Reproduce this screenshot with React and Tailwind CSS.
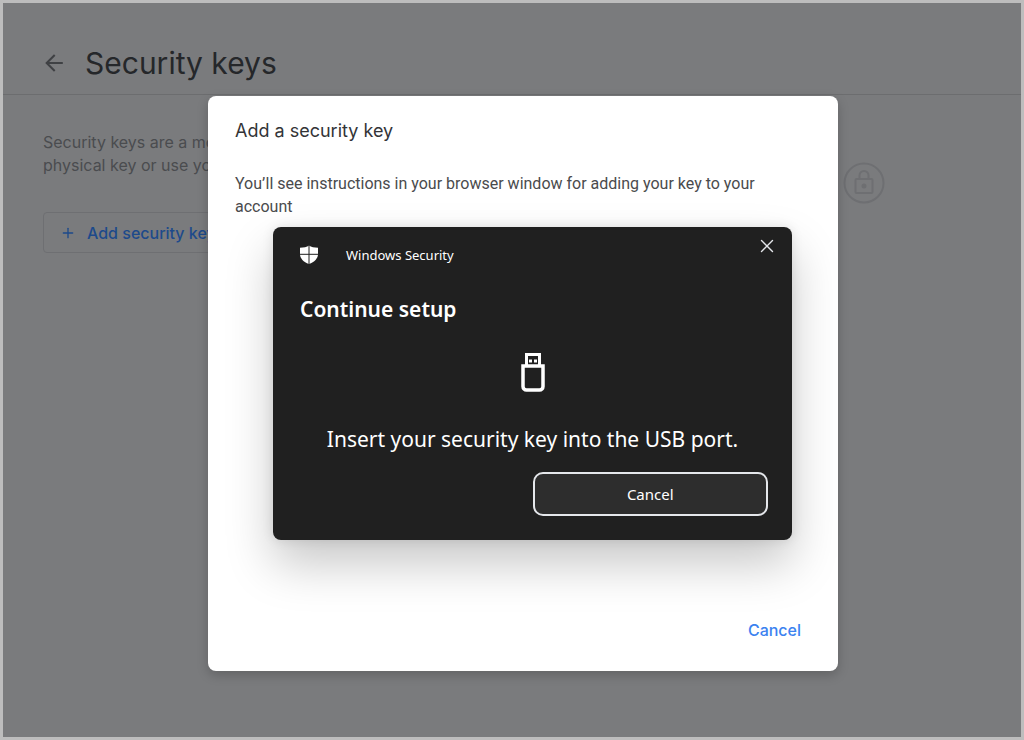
import { Plus, X } from 'lucide-react'

const BackIcon = () => (
  <svg width="22" height="20" viewBox="2 3 20 18" fill="currentColor" aria-hidden="true">
    <path d="M20 11.100H7.600L13.300 5.300L12 4L4 12L12 20L13.300 18.700L7.600 12.900H20Z" />
  </svg>
)

const ShieldIcon = () => (
  <svg width="20" height="20" viewBox="0 0 20 20" fill="none" aria-hidden="true">
    <path d="M10 0.500C12 2 15.500 2.700 19 2.700V9C19 13.500 15.500 17 10 19C4.500 17 1 13.500 1 9V2.700C4.500 2.700 8 2 10 0.500Z" fill="#fff" />
    <path d="M10 0V19M1 9.300H19" stroke="#202020" strokeWidth="1" />
  </svg>
)

const UsbIcon = () => (
  <svg width="24" height="40" viewBox="0 0 24 40" fill="none" stroke="#fff" aria-hidden="true">
    <path d="M5.500 13V2.500H18.500V13" strokeWidth="3" />
    <path d="M2 14H22V34.500A3.500 3.500 0 0 1 18.500 38H5.500A3.500 3.500 0 0 1 2 34.500Z" strokeWidth="3.500" />
    <path d="M8 9H11M13 9H16" strokeWidth="3" />
  </svg>
)

const LockBadge = () => (
  <svg width="42" height="42" viewBox="0 0 42 42" fill="none" stroke="#6e6f72" strokeWidth="2" aria-hidden="true">
    <circle cx="21" cy="21" r="19.500" />
    <rect x="12.500" y="17" width="17" height="14" rx="1" />
    <path d="M16.500 17V13.500A4.500 4.500 0 0 1 25.500 13.500V17" />
    <circle cx="21" cy="24" r="1.500" fill="#6e6f72" />
  </svg>
)

const SecurityPrompt = () => (
  <section
    aria-labelledby="prompt-title"
    className="ml-[38px] mt-[9px] w-[519px] max-w-full rounded-lg bg-[#202020] px-6 pb-6 pt-2 font-['Noto_Sans','Open_Sans',sans-serif] text-white shadow-[0_24px_48px_rgba(0,0,0,0.22),0_0_12px_rgba(0,0,0,0.1)]"
  >
    <div className="flex items-start justify-between">
      <div className="flex items-center gap-[27px] pl-0.5 pt-2.5">
        <ShieldIcon />
        <p className="text-[13px] leading-5">Windows Security</p>
      </div>
      <button type="button" aria-label="Close" className="-mr-2.5 text-gray-200">
        <X size={22} strokeWidth={1.5} />
      </button>
    </div>
    <h3 id="prompt-title" className="mt-7 pl-[3px] text-[21px] font-semibold leading-8">Continue setup</h3>
    <div className="mt-[27px] flex justify-center"><UsbIcon /></div>
    <p className="mt-[31px] text-center text-[21px] leading-8">Insert your security key into the USB port.</p>
    <div className="mt-[17px] flex justify-end">
      <button type="button" className="h-11 w-1/2 rounded-[10px] border-2 border-gray-200 bg-[#2d2d2d] text-[15px]">Cancel</button>
    </div>
  </section>
)

export default function App() {
  return (
    <div className="relative min-h-screen border-3 border-[#bdbdbd] bg-[#7a7b7d]">
      <header className="flex h-[92px] items-end border-b border-[#6c6d6f] pb-[11px] pl-10">
        <a href="#back" aria-label="Back" className="mb-2.5 text-[#3f4144]"><BackIcon /></a>
        <h1 className="ml-5 font-['Inter',sans-serif] text-[30px] leading-10 text-[#25272a]">Security keys</h1>
      </header>

      <main className="flex items-start justify-between pl-10 pr-[136px] pt-9">
        <div>
          <p className="font-['Inter',sans-serif] text-base leading-[23px] text-[#4a4c4f]">
            Security keys are a more
            <br />
            physical key or use your
          </p>
          <button type="button" className="mt-[35px] flex h-[41px] items-center gap-[11px] rounded border border-[#6e6f72] px-4 font-['Inter',sans-serif] text-base font-medium text-[#1d4a8b]">
            <Plus size={16} strokeWidth={2} />
            Add security key
          </button>
        </div>
        <div className="pt-[31px]"><LockBadge /></div>
      </main>

      {/* Modal layer */}
      <div className="absolute inset-0 flex items-start justify-center pl-[22px] pt-[93px]">
        <div
          role="dialog"
          aria-labelledby="dialog-title"
          className="w-[630px] max-w-full rounded-lg bg-white pb-[29px] pl-[27px] pr-[37px] pt-[21px] shadow-[0_4px_12px_rgba(0,0,0,0.2)]"
        >
          <h2 id="dialog-title" className="font-['Inter',sans-serif] text-lg leading-7 text-[#333437]">Add a security key</h2>
          <p className="mt-[27px] font-['Roboto',sans-serif] text-base leading-[23px] text-[#4a4b4d]">
            You’ll see instructions in your browser window for adding your key to your account
          </p>
          <SecurityPrompt />
          <div className="mt-[78px] flex justify-end">
            <button type="button" className="font-['Inter',sans-serif] text-base font-medium leading-6 text-[#3b82f0]">Cancel</button>
          </div>
        </div>
      </div>
    </div>
  )
}
